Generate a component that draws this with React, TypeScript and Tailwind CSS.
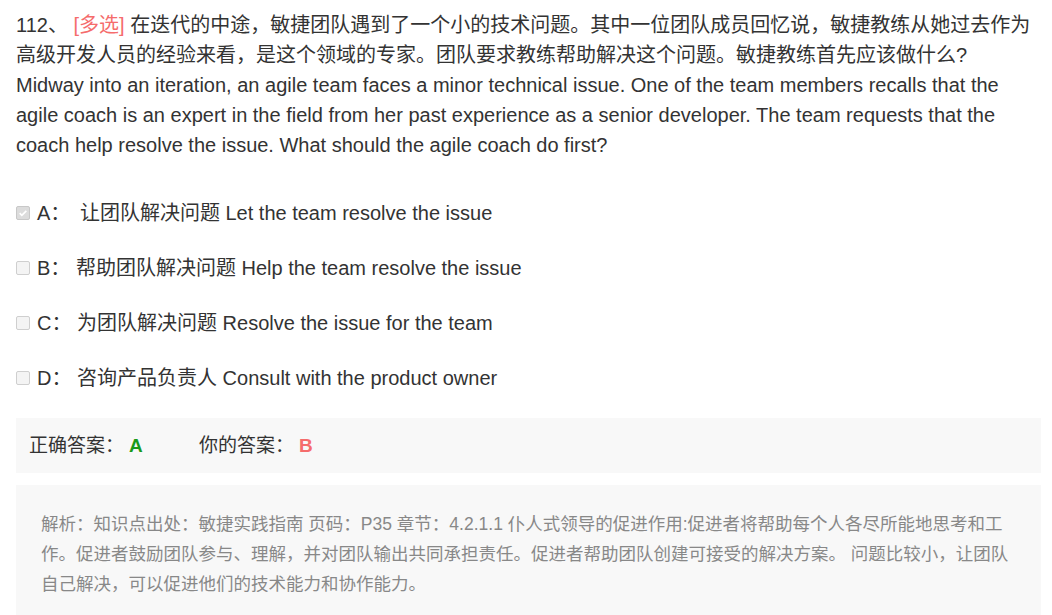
import React from 'react';

const font = { fontFamily: '"Liberation Sans", "Noto Sans CJK SC", sans-serif' };

const options = [
  { key: 'A', text: '\u2009让团队解决问题 Let the team resolve the issue', checked: true },
  { key: 'B', text: '帮助团队解决问题 Help the team resolve the issue', checked: false },
  { key: 'C', text: '为团队解决问题 Resolve the issue for the team', checked: false },
  { key: 'D', text: '咨询产品负责人 Consult with the product owner', checked: false },
];

const Box = ({ checked }: { checked: boolean }) => (
  <span
    className={`inline-flex items-center justify-center w-[14px] h-[14px] rounded-[2px] border mr-[7px] shrink-0 ${
      checked ? 'bg-[#dcdcdc] border-[#c8c8c8]' : 'bg-[#f4f4f4] border-[#cfcfcf]'
    }`}
  >
    {checked && (
      <svg viewBox="0 0 12 12" className="w-[10px] h-[10px]">
        <path d="M2 6.2l2.6 2.6L10 3.4" fill="none" stroke="#fff" strokeWidth="2" />
      </svg>
    )}
  </span>
);

export default function App() {
  return (
    <div className="bg-white w-[1052px] h-[615px] overflow-hidden pl-4 pr-[11px] pt-[10px] text-[#333]" style={font}>
      <p className="text-[20px] leading-[30px]">
        112、 <span className="text-[#f56c6c]">[多选]</span> 在迭代的中途，敏捷团队遇到了一个小的技术问题。其中一位团队成员回忆说，敏捷教练从她过去作为高级开发人员的经验来看，是这个领域的专家。团队要求教练帮助解决这个问题。敏捷教练首先应该做什么?
        <br />
        Midway into an iteration, an agile team faces a minor technical issue. One of the team members recalls that the agile coach is an expert in the field from her past experience as a senior developer. The team requests that the coach help resolve the issue. What should the agile coach do first?
      </p>

      <div className="mt-[38px] flex flex-col gap-[25px]">
        {options.map((o) => (
          <div key={o.key} className="flex items-center text-[20px] leading-[30px]">
            <Box checked={o.checked} />
            <span className="whitespace-pre">{o.key}： {o.text}</span>
          </div>
        ))}
      </div>

      <div className="mt-[25px] bg-[#f8f8f8] h-[55px] flex items-center px-[13px]">
        <div className="flex items-baseline text-[19px] leading-[30px]">
          <span className="w-[100px]">正确答案：</span>
          <span className="font-bold text-[#1a9a1a] w-[70px]">A</span>
          <span className="w-[100px]">你的答案：</span>
          <span className="font-bold text-[#f56c6c]">B</span>
        </div>
      </div>

      <div className="mt-3 bg-[#f8f8f8] h-[140px] pl-[25px] pr-[24px] pt-[24px] text-[17.5px] leading-[30px] text-[#888]">
        解析：知识点出处：敏捷实践指南 页码：P35 章节：4.2.1.1 仆人式领导的促进作用:促进者将帮助每个人各尽所能地思考和工作。促进者鼓励团队参与、理解，并对团队输出共同承担责任。促进者帮助团队创建可接受的解决方案。 问题比较小，让团队自己解决，可以促进他们的技术能力和协作能力。
      </div>
    </div>
  );
}
